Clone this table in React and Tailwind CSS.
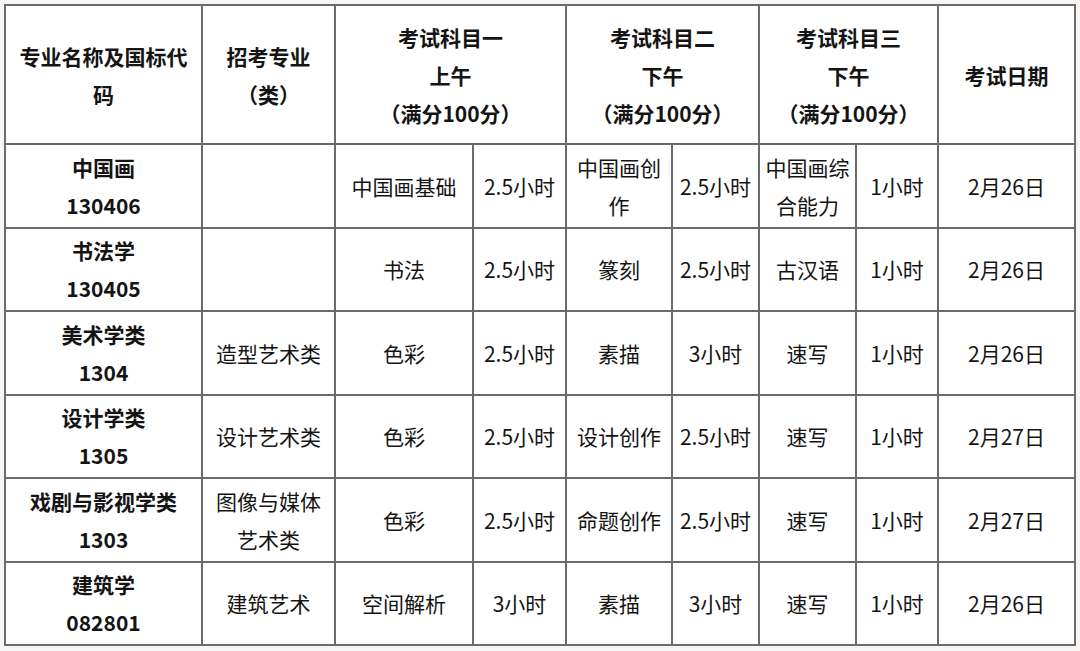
import React from "react";

const font = { fontFamily: '"Noto Sans CJK SC", "Noto Sans", sans-serif' };

const rows = [
  {
    name: ["中国画", "130406"],
    major: [],
    s1: ["中国画基础"], t1: "2.5小时",
    s2: ["中国画创", "作"], t2: "2.5小时",
    s3: ["中国画综", "合能力"], t3: "1小时",
    date: "2月26日",
  },
  {
    name: ["书法学", "130405"],
    major: [],
    s1: ["书法"], t1: "2.5小时",
    s2: ["篆刻"], t2: "2.5小时",
    s3: ["古汉语"], t3: "1小时",
    date: "2月26日",
  },
  {
    name: ["美术学类", "1304"],
    major: ["造型艺术类"],
    s1: ["色彩"], t1: "2.5小时",
    s2: ["素描"], t2: "3小时",
    s3: ["速写"], t3: "1小时",
    date: "2月26日",
  },
  {
    name: ["设计学类", "1305"],
    major: ["设计艺术类"],
    s1: ["色彩"], t1: "2.5小时",
    s2: ["设计创作"], t2: "2.5小时",
    s3: ["速写"], t3: "1小时",
    date: "2月27日",
  },
  {
    name: ["戏剧与影视学类", "1303"],
    major: ["图像与媒体", "艺术类"],
    s1: ["色彩"], t1: "2.5小时",
    s2: ["命题创作"], t2: "2.5小时",
    s3: ["速写"], t3: "1小时",
    date: "2月27日",
  },
  {
    name: ["建筑学", "082801"],
    major: ["建筑艺术"],
    s1: ["空间解析"], t1: "3小时",
    s2: ["素描"], t2: "3小时",
    s3: ["速写"], t3: "1小时",
    date: "2月26日",
  },
];

const Lines = ({ lines }) =>
  lines.map((l, i) => (
    <div key={i} className="whitespace-nowrap">
      {l}
    </div>
  ));

const td = "border-2 border-[#6b6b6b] text-center align-middle p-0";

export default function App() {
  return (
    <div className="w-[1080px] h-[651px] bg-[#f7f6f4] pt-[4px] pl-[4px] overflow-hidden" style={font}>
      <table className="table-fixed border-collapse bg-white w-[1070px] text-[21px] leading-[38px] text-[#141414]">
        <colgroup>
          <col className="w-[197px]" />
          <col className="w-[133px]" />
          <col className="w-[138px]" />
          <col className="w-[93px]" />
          <col className="w-[106px]" />
          <col className="w-[87px]" />
          <col className="w-[97px]" />
          <col className="w-[82px]" />
          <col className="w-[137px]" />
        </colgroup>
        <thead>
          <tr className="h-[139px] font-bold">
            <th className={td + " px-2"}>专业名称及国标代码</th>
            <th className={td}>
              <Lines lines={["招考专业", "（类）"]} />
            </th>
            <th className={td} colSpan={2}>
              <Lines lines={["考试科目一", "上午", "（满分100分）"]} />
            </th>
            <th className={td} colSpan={2}>
              <Lines lines={["考试科目二", "下午", "（满分100分）"]} />
            </th>
            <th className={td} colSpan={2}>
              <Lines lines={["考试科目三", "下午", "（满分100分）"]} />
            </th>
            <th className={td}>考试日期</th>
          </tr>
        </thead>
        <tbody>
          {rows.map((r, i) => (
            <tr key={i} className="h-[83.5px]">
              <td className={td + " font-bold"}>
                <Lines lines={r.name} />
              </td>
              <td className={td}>
                <Lines lines={r.major} />
              </td>
              <td className={td}>
                <Lines lines={r.s1} />
              </td>
              <td className={td + " whitespace-nowrap"}>{r.t1}</td>
              <td className={td}>
                <Lines lines={r.s2} />
              </td>
              <td className={td + " whitespace-nowrap"}>{r.t2}</td>
              <td className={td}>
                <Lines lines={r.s3} />
              </td>
              <td className={td + " whitespace-nowrap"}>{r.t3}</td>
              <td className={td}>{r.date}</td>
            </tr>
          ))}
        </tbody>
      </table>
    </div>
  );
}
